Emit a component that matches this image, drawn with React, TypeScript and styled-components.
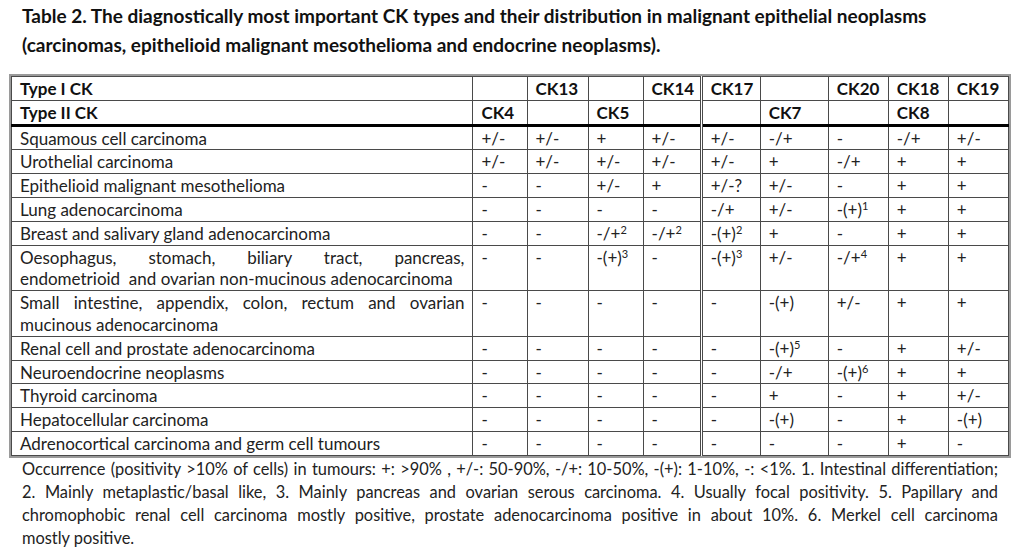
import React from "react";
import styled, { createGlobalStyle } from "styled-components";

const GlobalStyle = createGlobalStyle`
  html, body {
    margin: 0;
    padding: 0;
    background: #ffffff;
  }
  body {
    font-family: Lato, "Open Sans", "Liberation Sans", sans-serif;
    color: #1a1a1a;
  }
`;

const Page = styled.div`
  width: 1020px;
  padding: 1px 0 0 0;
  box-sizing: border-box;
`;

const Title = styled.h1`
  margin: 0 0 0 22px;
  font-size: 19px;
  line-height: 29px;
  font-weight: 700;
  color: #111;
`;

const Frame = styled.div`
  margin: 15px 0 0 9px;
  width: 1002px;
  border: 2px solid #9a9a9a;
  box-sizing: border-box;
`;

const Table = styled.table`
  width: 100%;
  table-layout: fixed;
  border-collapse: collapse;
  font-size: 17px;
  line-height: 21.8px;
`;

const cellBase = `
  border: 1px solid #4a4a4a;
  padding: 1px 8px 0 8px;
  text-align: left;
  vertical-align: top;
  white-space: nowrap;
  overflow: hidden;
`;

const HeadCell = styled.th<{ $split?: boolean; $last?: boolean }>`
  ${cellBase}
  height: 21px;
  font-weight: 700;
  color: #111;
  ${({ $split }) => ($split ? "border-left: 3px double #4a4a4a;" : "")}
  ${({ $last }) => ($last ? "border-bottom: 3px solid #000;" : "")}
`;

const NameCell = styled.td`
  ${cellBase}
  white-space: normal;
  text-align: justify;
  color: #222;
`;

const ValueCell = styled.td<{ $split?: boolean }>`
  ${cellBase}
  color: #222;
  ${({ $split }) => ($split ? "border-left: 3px double #4a4a4a;" : "")}
`;

const JustLine = styled.span`
  display: block;
  text-align: justify;
  text-align-last: justify;
`;

const Sup = styled.sup`
  font-size: 11px;
  line-height: 0;
  vertical-align: 6px;
`;

const Notes = styled.div`
  margin: -1px 22px 0 22px;
  font-size: 16.4px;
  line-height: 23px;
  color: #222;
`;

const NoteLine = styled.div<{ $last?: boolean }>`
  text-align: justify;
  text-align-last: ${({ $last }) => ($last ? "left" : "justify")};
  white-space: nowrap;
`;

type Cell = string | { v: string; sup: string };

interface Row {
  name: React.ReactNode;
  values: Cell[];
}

const COL_WIDTHS = [461, 54, 61, 55, 58, 59, 68, 60, 60, 60];

const HEAD_1 = ["Type I CK", "", "CK13", "", "CK14", "CK17", "", "CK20", "CK18", "CK19"];
const HEAD_2 = ["Type II CK", "CK4", "", "CK5", "", "", "CK7", "", "CK8", ""];

const ROWS: Row[] = [
  { name: "Squamous cell carcinoma", values: ["+/-", "+/-", "+", "+/-", "+/-", "-/+", "-", "-/+", "+/-"] },
  { name: "Urothelial carcinoma", values: ["+/-", "+/-", "+/-", "+/-", "+/-", "+", "-/+", "+", "+"] },
  { name: "Epithelioid malignant mesothelioma", values: ["-", "-", "+/-", "+", "+/-?", "+/-", "-", "+", "+"] },
  { name: "Lung adenocarcinoma", values: ["-", "-", "-", "-", "-/+", "+/-", { v: "-(+)", sup: "1" }, "+", "+"] },
  {
    name: "Breast and salivary gland adenocarcinoma",
    values: ["-", "-", { v: "-/+", sup: "2" }, { v: "-/+", sup: "2" }, { v: "-(+)", sup: "2" }, "+", "-", "+", "+"],
  },
  {
    name: (
      <>
        <JustLine>Oesophagus, stomach, biliary tract, pancreas,</JustLine>
        endometrioid&nbsp; and ovarian non-mucinous adenocarcinoma
      </>
    ),
    values: ["-", "-", { v: "-(+)", sup: "3" }, "-", { v: "-(+)", sup: "3" }, "+/-", { v: "-/+", sup: "4" }, "+", "+"],
  },
  {
    name: (
      <>
        <JustLine>Small intestine, appendix, colon, rectum and ovarian</JustLine>
        mucinous adenocarcinoma
      </>
    ),
    values: ["-", "-", "-", "-", "-", "-(+)", "+/-", "+", "+"],
  },
  {
    name: "Renal cell and prostate adenocarcinoma",
    values: ["-", "-", "-", "-", "-", { v: "-(+)", sup: "5" }, "-", "+", "+/-"],
  },
  {
    name: "Neuroendocrine neoplasms",
    values: ["-", "-", "-", "-", "-", "-/+", { v: "-(+)", sup: "6" }, "+", "+"],
  },
  { name: "Thyroid carcinoma", values: ["-", "-", "-", "-", "-", "+", "-", "+", "+/-"] },
  { name: "Hepatocellular carcinoma", values: ["-", "-", "-", "-", "-", "-(+)", "-", "+", "-(+)"] },
  { name: "Adrenocortical carcinoma and germ cell tumours", values: ["-", "-", "-", "-", "-", "-", "-", "+", "-"] },
];

const FOOTNOTE = [
  "Occurrence (positivity >10% of cells) in tumours: +: >90% , +/-: 50-90%, -/+: 10-50%, -(+): 1-10%, -: <1%. 1. Intestinal differentiation;",
  "2. Mainly metaplastic/basal like, 3. Mainly pancreas and ovarian serous carcinoma. 4. Usually focal positivity. 5. Papillary and",
  "chromophobic renal cell carcinoma mostly positive, prostate adenocarcinoma positive in about 10%. 6. Merkel cell carcinoma",
  "mostly positive.",
];

function renderCell(c: Cell) {
  if (typeof c === "string") return c;
  return (
    <>
      {c.v}
      <Sup>{c.sup}</Sup>
    </>
  );
}

export default function App() {
  return (
    <Page>
      <GlobalStyle />
      <Title>
        Table 2. The diagnostically most important CK types and their distribution in malignant epithelial neoplasms
        <br />
        (carcinomas, epithelioid malignant mesothelioma and endocrine neoplasms).
      </Title>

      <Frame>
        <Table>
          <colgroup>
            {COL_WIDTHS.map((w, i) => (
              <col key={i} style={{ width: w }} />
            ))}
          </colgroup>
          <thead>
            <tr>
              {HEAD_1.map((h, i) => (
                <HeadCell key={i} $split={i === 5}>
                  {h}
                </HeadCell>
              ))}
            </tr>
            <tr>
              {HEAD_2.map((h, i) => (
                <HeadCell key={i} $split={i === 5} $last>
                  {h}
                </HeadCell>
              ))}
            </tr>
          </thead>
          <tbody>
            {ROWS.map((r, ri) => (
              <tr key={ri}>
                <NameCell>{r.name}</NameCell>
                {r.values.map((v, i) => (
                  <ValueCell key={i} $split={i === 4}>
                    {renderCell(v)}
                  </ValueCell>
                ))}
              </tr>
            ))}
          </tbody>
        </Table>
      </Frame>

      <Notes>
        {FOOTNOTE.map((line, i) => (
          <NoteLine key={i} $last={i === FOOTNOTE.length - 1}>
            {line}
          </NoteLine>
        ))}
      </Notes>
    </Page>
  );
}
